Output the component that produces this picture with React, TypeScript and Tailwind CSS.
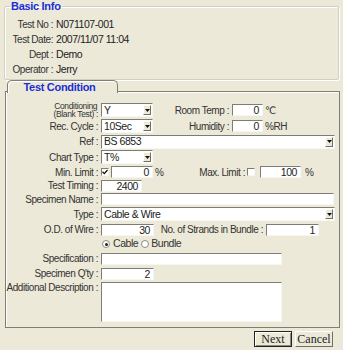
import type { ReactNode } from 'react'

const sunken =
  'border-t border-l border-b border-r border-t-[#7d7d75] border-l-[#7d7d75] border-b-[#f7f6f0] border-r-[#f7f6f0] bg-white'

function Field({ w, value, h = 'h-[12px]' }: { w: string; value?: string; h?: string }) {
  return (
    <div className={`${w} ${h} ${sunken} flex items-center justify-end pr-[3px] text-[10.5px] leading-[10px] text-[#222]`}>
      {value}
    </div>
  )
}

function Combo({ w, value }: { w: string; value: string }) {
  return (
    <div className={`${w} h-[14px] ${sunken} flex items-center justify-between pl-[2px] pr-[1px] text-[10.5px] text-[#222]`}>
      <span className="leading-[11px]">{value}</span>
      <span className="flex h-[10px] w-[8px] items-center justify-center border border-t-white border-l-white border-b-[#6f6f68] border-r-[#6f6f68] bg-[#ece9d8]">
        <svg width="5" height="3" viewBox="0 0 5 3">
          <path d="M0 0h5L2.5 3z" fill="#111" />
        </svg>
      </span>
    </div>
  )
}

function Check({ checked }: { checked?: boolean }) {
  return (
    <span className={`flex h-[8px] w-[8px] items-center justify-center ${sunken}`}>
      {checked && (
        <svg width="6" height="6" viewBox="0 0 6 6">
          <path d="M0.5 2.8l1.8 1.8L5.5 1" fill="none" stroke="#111" strokeWidth="1.3" />
        </svg>
      )}
    </span>
  )
}

function Radio({ on }: { on?: boolean }) {
  return (
    <span className="flex h-[8px] w-[8px] items-center justify-center rounded-full border border-[#8c8c84] bg-white">
      {on && <span className="h-[3px] w-[3px] rounded-full bg-[#222]" />}
    </span>
  )
}

// right-aligned label box that overflows to the left instead of wrapping
function Label({ w, children }: { w: string; children: ReactNode }) {
  return <span className={`${w} flex shrink-0 justify-end whitespace-nowrap`}>{children}</span>
}

function Row({ label, h, children, top }: { label: ReactNode; h: string; children?: ReactNode; top?: boolean }) {
  return (
    <div className={`flex ${top ? 'items-start' : 'items-center'} ${h}`}>
      <div className="flex w-[92px] shrink-0 justify-end whitespace-nowrap leading-[11px]">{label}</div>
      <div className={`ml-[3px] flex ${top ? 'items-start' : 'items-center'}`}>{children}</div>
    </div>
  )
}

export default function App() {
  const basic = [
    ['Test No :', 'N071107-001'],
    ['Test Date:', '2007/11/07 11:04'],
    ['Dept :', 'Demo'],
    ['Operator :', 'Jerry'],
  ]

  return (
    <div className="h-[350px] w-[343px] overflow-hidden bg-[#ece9d8] font-['Liberation_Sans',Arial,sans-serif] text-[10px] tracking-[-0.45px] text-[#333]">
      {/* Basic Info group */}
      <fieldset className="mx-[4px] h-[80px] rounded-[2px] border border-[#d0d0bf] shadow-[inset_1px_1px_0_#fff,1px_1px_0_#fff]">
        <legend className="ml-[5px] px-[1px] text-[11px] font-bold leading-[12px] tracking-[-0.3px] text-[#1a2ed6]">
          Basic Info
        </legend>
        <div className="pt-[5px]">
          {basic.map(([k, v]) => (
            <div key={k} className="flex h-[15px] items-center">
              <Label w="w-[48px]">{k}</Label>
              <span className="ml-[3px] whitespace-nowrap text-[10.5px] text-[#222]">{v}</span>
            </div>
          ))}
        </div>
      </fieldset>

      {/* Tab header */}
      <div className="relative z-10 -mb-[2px] ml-[7px] flex h-[13px] w-[111px] items-end justify-center rounded-t-[5px] border-l border-r border-t border-[#7e7e76] bg-[#ece9d8] shadow-[inset_1px_1px_0_#fff]">
        <span className="pr-[6px] text-[11px] font-bold leading-[11px] tracking-[-0.3px] text-[#1a2ed6]">Test Condition</span>
      </div>

      {/* Tab panel */}
      <div className="ml-[5px] h-[237px] w-[335px] border border-[#7e7e76] pt-[10px] shadow-[inset_1px_1px_0_#fff]">
        <Row
          h="h-[16px]"
          label={
            <span className="block text-center text-[8.5px] leading-[8.5px] tracking-[-0.35px]">
              Conditioning
              <br />
              (Blank Test) :
            </span>
          }
        >
          <Combo w="w-[52px]" value="Y" />
          <Label w="w-[76px]">Room Temp :</Label>
          <span className="ml-[3px]">
            <Field w="w-[31px]" value="0" />
          </span>
          <span className="ml-[2px] font-['DejaVu_Sans',sans-serif] text-[10px]">℃</span>
        </Row>
        <Row h="h-[16px]" label="Rec. Cycle :">
          <Combo w="w-[52px]" value="10Sec" />
          <Label w="w-[76px]">Humidity :</Label>
          <span className="ml-[3px]">
            <Field w="w-[31px]" value="0" />
          </span>
          <span className="ml-[2px]">%RH</span>
        </Row>
        <Row h="h-[15px]" label="Ref :">
          <Combo w="w-[234px]" value="BS 6853" />
        </Row>
        <Row h="h-[16px]" label="Chart Type :">
          <Combo w="w-[52px]" value="T%" />
        </Row>
        <Row h="h-[14px]" label="Min. Limit :">
          <div className="flex w-[100px] items-center">
            <Check checked />
            <span className="ml-[2px]">
              <Field w="w-[42px]" value="0" />
            </span>
            <span className="ml-[2px]">%</span>
          </div>
          <Label w="w-[44px]">Max. Limit :</Label>
          <span className="ml-[2px]">
            <Check />
          </span>
          <span className="ml-[5px]">
            <Field w="w-[41px]" value="100" />
          </span>
          <span className="ml-[4px]">%</span>
        </Row>
        <Row h="h-[13px]" label="Test Timing :">
          <Field w="w-[41px]" value="2400" />
        </Row>
        <Row h="h-[14px]" label="Specimen Name :">
          <Field w="w-[233px]" />
        </Row>
        <Row h="h-[16px]" label="Type :">
          <Combo w="w-[234px]" value="Cable & Wire" />
        </Row>
        <Row h="h-[15px]" label="O.D. of Wire :">
          <Field w="w-[53px]" value="30" />
          <Label w="w-[109px]">No. of Strands in Bundle :</Label>
          <span className="ml-[3px]">
            <Field w="w-[53px]" value="1" />
          </span>
        </Row>
        <Row h="h-[14px]" label="">
          <span className="ml-[1px]">
            <Radio on />
          </span>
          <span className="ml-[3px] text-[10.5px]">Cable</span>
          <span className="ml-[3px]">
            <Radio />
          </span>
          <span className="ml-[2px] text-[10.5px]">Bundle</span>
        </Row>
        <Row h="h-[15px]" label="Specification :">
          <Field w="w-[181px]" />
        </Row>
        <Row h="h-[15px]" label="Specimen Q'ty :">
          <Field w="w-[53px]" value="2" />
        </Row>
        <div className="mt-[1px]">
          <Row h="h-[40px]" label="Additional Description :" top>
            <Field w="w-[181px]" h="h-[40px]" />
          </Row>
        </div>
      </div>

      {/* Buttons */}
      <div className="mt-[3px] flex justify-end gap-[3px] pr-[10px] font-['Liberation_Serif',serif] text-[12px] tracking-normal text-[#222]">
        <button className="h-[16px] w-[38px] border border-[#222] bg-[#ece9d8] leading-[12px] shadow-[inset_1px_1px_0_#fff,inset_-1px_-1px_0_#8a8a82]">
          Next
        </button>
        <button className="h-[16px] w-[38px] border border-t-white border-l-white border-b-[#6f6f68] border-r-[#6f6f68] bg-[#ece9d8] leading-[12px]">
          Cancel
        </button>
      </div>
    </div>
  )
}
